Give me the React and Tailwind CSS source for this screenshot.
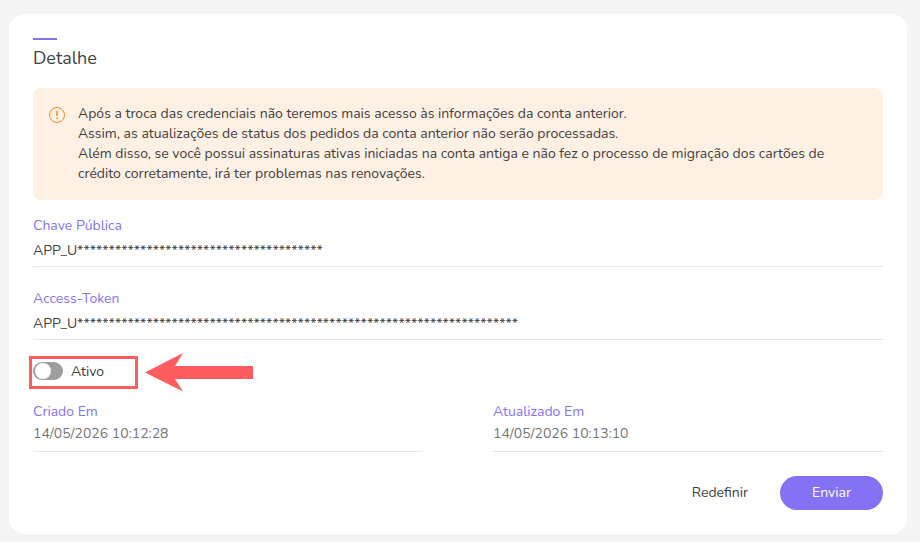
import React, { useState } from "react";

function SecretField({ id, label, defaultValue }) {
  return (
    <div className="border-b border-[#e6e6e6] pb-1">
      <label htmlFor={id} className="block text-sm text-[#8571f4]">
        {label}
      </label>
      <input
        id={id}
        type="text"
        defaultValue={defaultValue}
        className="mt-1 block w-full bg-transparent text-sm leading-[22px] text-[#414141] outline-none"
      />
    </div>
  );
}

function DateField({ label, value }) {
  return (
    <div className="flex-1 border-b border-[#e6e6e6] pb-[7px]">
      <dt className="text-sm text-[#8571f4]">{label}</dt>
      <dd className="mt-0.5 text-sm text-[#757575]">{value}</dd>
    </div>
  );
}

function WarningIcon() {
  return (
    <svg viewBox="0 0 16 16" className="mt-[3px] h-4 w-4 shrink-0" fill="none" aria-hidden="true">
      <circle cx="8" cy="8" r="7.5" stroke="#f18b22" />
      <path d="M8 4v5" stroke="#f18b22" strokeWidth="1.5" />
      <path d="M8 10.5v1.5" stroke="#f18b22" strokeWidth="1.5" />
    </svg>
  );
}

export default function App() {
  const [active, setActive] = useState(false);

  return (
    <div className="min-h-screen bg-[#f4f4f4] pt-3.5 pr-[13px] pb-2 pl-[9px] font-['Nunito','Lato','Open_Sans',sans-serif]">
      <form className="rounded-2xl bg-white p-6" onSubmit={(e) => e.preventDefault()}>
        <div className="h-0.5 w-6 bg-[#8571f4]" />
        <h1 className="mt-1 text-lg leading-7 text-[#414141]">Detalhe</h1>

        <div className="mt-4 flex gap-[13px] rounded-lg bg-[#fff0e4] p-4 text-sm text-[#414141]">
          <WarningIcon />
          <p>
            Após a troca das credenciais não teremos mais acesso às informações da conta anterior.
            <br />
            Assim, as atualizações de status dos pedidos da conta anterior não serão processadas.
            <br />
            Além disso, se você possui assinaturas ativas iniciadas na conta antiga e não fez o processo de migração dos
            cartões de crédito corretamente, irá ter problemas nas renovações.
          </p>
        </div>

        <div className="mt-4 flex flex-col gap-[22px]">
          <SecretField id="public-key" label="Chave Pública" defaultValue={"APP_U" + "*".repeat(39)} />
          <SecretField id="access-token" label="Access-Token" defaultValue={"APP_U" + "*".repeat(70)} />
        </div>

        <div className="relative mt-5 flex">
          <label className="flex cursor-pointer items-start gap-2 text-sm leading-6 text-[#414141]">
            <input type="checkbox" role="switch" checked={active} onChange={() => setActive(!active)} className="peer sr-only" />
            <span className="mt-0.5 flex h-[18px] w-[30px] items-center rounded-full bg-[#9e9e9e] px-0.5 peer-checked:justify-end peer-checked:bg-[#8571f4]">
              <span className="h-4 w-4 rounded-full bg-white" />
            </span>
            Ativo
          </label>
          {/* highlight */}
          <div className="pointer-events-none absolute -top-[7px] -left-1 flex items-center gap-[7px]">
            <div className="h-[33px] w-[109px] border-3 border-[#ff5c5f]" />
            <svg viewBox="0 0 108 39" className="h-[39px] w-[108px]" fill="#ff5c5f" aria-hidden="true">
              <path d="M0 19.500L38 0L30 13H108V26H30L38 38.500Z" />
            </svg>
          </div>
        </div>

        <dl className="mt-[18px] flex gap-[70px]">
          <DateField label="Criado Em" value="14/05/2026 10:12:28" />
          <DateField label="Atualizado Em" value="14/05/2026 10:13:10" />
        </dl>

        <div className="mt-6 flex justify-end gap-4 text-sm">
          <button type="reset" className="px-4 text-[#414141]">
            Redefinir
          </button>
          <button type="submit" className="h-[34px] rounded-full bg-[#8571f4] px-8 text-white">
            Enviar
          </button>
        </div>
      </form>
    </div>
  );
}
